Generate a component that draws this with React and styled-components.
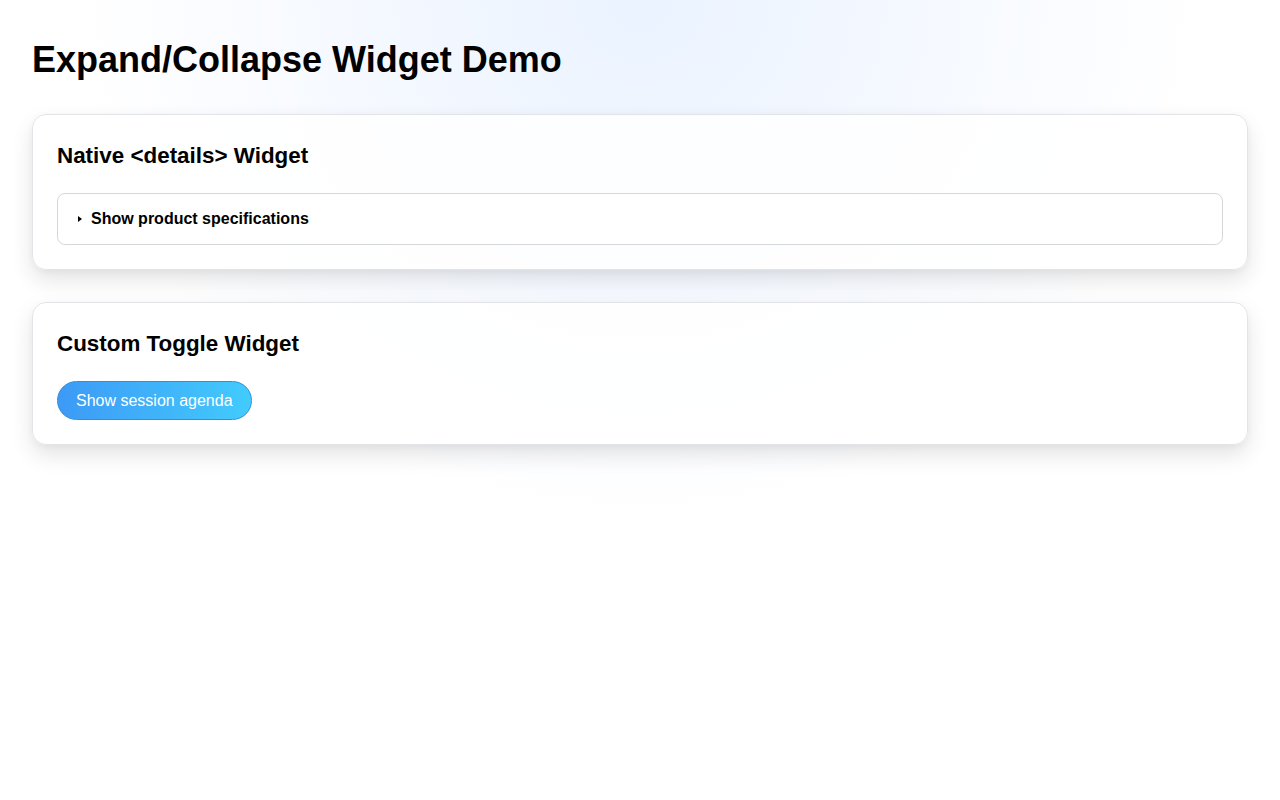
import React, { useState } from 'react';
import styled, { createGlobalStyle } from 'styled-components';

const GlobalStyle = createGlobalStyle`
  html, body {
    margin: 0;
    padding: 0;
    min-height: 100%;
  }
  body {
    font-family: "Liberation Sans", Arial, Helvetica, sans-serif;
    color: #000;
    background: radial-gradient(ellipse 560px 520px at 640px 0px, #eaf3ff 0%, #f4f8ff 45%, #ffffff 100%) no-repeat, #ffffff;
    min-height: 800px;
  }
`;

const Page = styled.main`
  padding: 38px 32px 32px;
`;

const Title = styled.h1`
  margin: 0 0 33px;
  font-size: 36px;
  line-height: 1.2;
  font-weight: 700;
`;

const Card = styled.section`
  background: rgba(255, 255, 255, 0.82);
  border: 1px solid #e2e4e8;
  border-radius: 14px;
  padding: 24px;
  margin-bottom: 32px;
  box-shadow: 0 10px 22px rgba(0, 0, 0, 0.11), 0 2px 6px rgba(0, 0, 0, 0.04);
`;

const CardTitle = styled.h2`
  margin: 0 0 20px;
  font-size: 22.4px;
  line-height: 34px;
  font-weight: 700;
`;

const Details = styled.details`
  border: 1px solid #d5d7db;
  border-radius: 8px;
  background: #fff;
  padding: 16px;

  &[open] > summary::before {
    transform: rotate(90deg);
  }
`;

const Summary = styled.summary`
  display: flex;
  align-items: center;
  list-style: none;
  font-size: 16px;
  font-weight: 700;
  line-height: 18px;
  cursor: pointer;

  &::-webkit-details-marker {
    display: none;
  }

  &::before {
    content: '';
    flex: none;
    width: 0;
    height: 0;
    margin: 0 9px 0 4px;
    border-left: 4px solid #000;
    border-top: 3.5px solid transparent;
    border-bottom: 3.5px solid transparent;
  }
`;

const Specs = styled.ul`
  margin: 12px 0 0;
  padding-left: 20px;
  font-size: 15px;
  line-height: 1.5;
`;

const ToggleButton = styled.button`
  font-family: inherit;
  font-size: 16px;
  line-height: 17px;
  color: #fff;
  padding: 10px 18px;
  border: 1px solid #2f8fd8;
  border-radius: 999px;
  background: linear-gradient(90deg, #3d9af6 0%, #42cbfd 100%);
  cursor: pointer;
`;

const Agenda = styled.ol`
  margin: 16px 0 0;
  padding-left: 20px;
  font-size: 15px;
  line-height: 1.5;
`;

export default function App() {
  const [open, setOpen] = useState(false);

  return (
    <>
      <GlobalStyle />
      <Page>
        <Title>Expand/Collapse Widget Demo</Title>

        <Card>
          <CardTitle>Native &lt;details&gt; Widget</CardTitle>
          <Details>
            <Summary>Show product specifications</Summary>
            <Specs>
              <li>Weight: 1.2 kg</li>
              <li>Battery: up to 12 hours</li>
              <li>Display: 14" IPS</li>
            </Specs>
          </Details>
        </Card>

        <Card>
          <CardTitle>Custom Toggle Widget</CardTitle>
          <ToggleButton aria-expanded={open} onClick={() => setOpen(!open)}>
            {open ? 'Hide session agenda' : 'Show session agenda'}
          </ToggleButton>
          {open && (
            <Agenda>
              <li>09:00 Welcome</li>
              <li>10:00 Keynote</li>
              <li>11:30 Workshops</li>
            </Agenda>
          )}
        </Card>
      </Page>
    </>
  );
}
